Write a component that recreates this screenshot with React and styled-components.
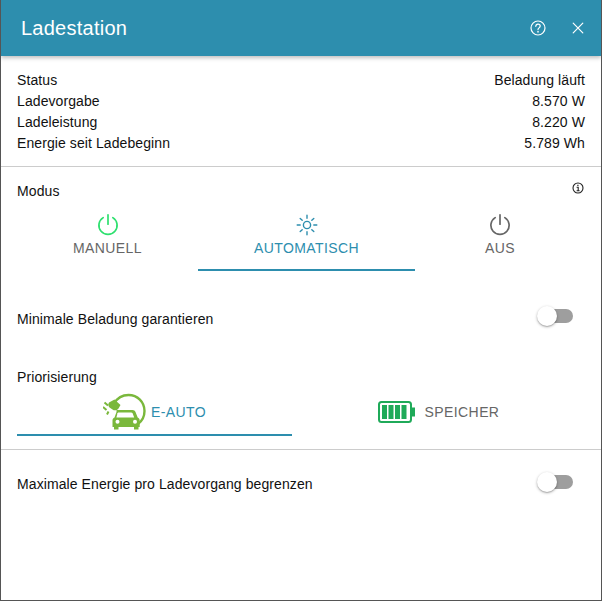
import React from "react";
import styled, { createGlobalStyle } from "styled-components";

const Global = createGlobalStyle`
  html, body { margin: 0; padding: 0; background: #fff; }
  * { box-sizing: border-box; }
`;

const Dialog = styled.div`
  width: 602px;
  height: 601px;
  display: flex;
  flex-direction: column;
  border: 2px solid #555;
  border-width: 0 1px 1px 1px;
  background: #fff;
  font-family: "Liberation Sans", Arial, sans-serif;
  font-size: 14px;
  letter-spacing: 0.09px;
  color: #111;
  overflow: hidden;
`;

const Header = styled.header`
  height: 56px;
  flex: none;
  background: #2d8eae;
  color: #fff;
  display: flex;
  align-items: center;
  padding: 0 3px 0 20px;
  box-shadow: 0 2px 4px rgba(0, 0, 0, 0.25);
  position: relative;
`;

const Title = styled.h1`
  flex: 1;
  margin: 0;
  font-size: 20px;
  font-weight: 400;
  letter-spacing: 0.25px;
`;

const HeaderIcon = styled.span`
  width: 40px;
  height: 24px;
  display: flex;
  align-items: center;
  justify-content: center;
`;

const StatusList = styled.section`
  padding: 14px 16px 12px;
  border-bottom: 1px solid #ccc;
`;

const StatusRow = styled.div`
  display: flex;
  justify-content: space-between;
  height: 21px;
  line-height: 21px;
`;

const ModeSection = styled.section`
  padding: 14px 16px 0;
`;

const LabelRow = styled.div`
  display: flex;
  justify-content: space-between;
  align-items: center;
  height: 20px;
`;

const InfoWrap = styled.span`
  display: flex;
  margin: -6px 1px 0 0;
`;

const Tabs = styled.div`
  display: flex;
`;

const Tab = styled.div`
  flex: ${(p) => p.$grow} 0 0;
  height: ${(p) => p.$height}px;
  display: flex;
  flex-direction: ${(p) => p.$dir || "column"};
  align-items: center;
  justify-content: center;
  gap: ${(p) => p.$gap || 0}px;
  border-bottom: 2px solid ${(p) => (p.$active ? "#2d8eae" : "transparent")};
  color: ${(p) => (p.$active ? "#2d8eae" : "#666")};
`;

const ModeTab = styled(Tab)`
  padding-top: 12px;
  gap: 1px;
  justify-content: flex-start;
`;

const TabLabel = styled.span`
  font-size: 14px;
  line-height: 20px;
  letter-spacing: 0.4px;
  text-transform: uppercase;
`;

const SwitchRow = styled.div`
  display: flex;
  justify-content: space-between;
  align-items: center;
  height: 20px;
  padding-right: 12px;
`;

const SwitchLabel = styled.span`
  position: relative;
  top: ${(p) => p.$drop}px;
`;

const Track = styled.span`
  position: relative;
  display: block;
  width: 34px;
  height: 14px;
  border-radius: 7px;
  background: #9e9e9e;
`;

const Knob = styled.span`
  position: absolute;
  left: -2px;
  top: -3px;
  width: 20px;
  height: 20px;
  border-radius: 50%;
  background: #fff;
  box-shadow: 0 1px 3px rgba(0, 0, 0, 0.3), 0 1px 1px rgba(0, 0, 0, 0.14);
`;

const MinCharge = styled.div`
  padding: 35px 16px 0;
`;

const PrioSection = styled.section`
  padding: 41px 16px 13px;
  border-bottom: 1px solid #ccc;
`;

const PrioTabs = styled(Tabs)`
  margin-top: 3px;
`;

const MaxEnergy = styled.section`
  padding: 22px 16px 0;
`;

const Power = ({ color }) => (
  <svg width="24" height="24" viewBox="0 0 24 24" fill="none" stroke={color} strokeWidth="1.7" strokeLinecap="round">
    <path d="M7.2 4.6a9.1 9.1 0 1 0 9.6 0" />
    <path d="M12 1.8v9.4" />
  </svg>
);

const Sun = () => (
  <svg width="24" height="24" viewBox="0 0 24 24" fill="none" stroke="#2d8eae" strokeWidth="1.4" strokeLinecap="round">
    <circle cx="12" cy="12" r="3.6" />
    <path d="M12 2.2v3M12 18.8v3M2.2 12h3M18.8 12h3M5.2 5.4l2 1.9M16.8 16.7l2 1.9M18.8 5.4l-2 1.9M7.2 16.7l-2 1.9" />
  </svg>
);

const EvIcon = () => (
  <svg width="46" height="38" viewBox="0 0 46 38">
    <path d="M11 10.5C14 5.5 19 2 25.500 2 34.500 2 41.500 9 41.500 18c0 5.500-2.500 10-6.500 13" fill="none" stroke="#7ab83c" strokeWidth="2.400" />
    <path d="M11.500 6.500l6 5.500-2 3.500c-1.500 2-4 2.500-6 1L6.500 14.500c-1.500-1.500-1.500-3.500-.5-5z" fill="#7ab83c" />
    <path d="M1.500 9.500l3.500 3M0 14l3.500 3M5.500 18.500L4 21.500" stroke="#7ab83c" strokeWidth="2" fill="none" />
    <path d="M13.500 17h16c1.500 0 2.500.8 3 2l2.200 5.500c1.300.6 2 1.600 2 3V34h-1.200v2.500h-4.500V34H15.500v2.500H11V34H9.500v-6.500c0-1.400.7-2.400 2-3L13.500 19c.1-1 0-2 0-2z" fill="#7ab83c" />
    <path d="M15.200 19.500h12.800c.8 0 1.400.4 1.700 1.100l1.500 3.900H13.400l1.100-4.300z" fill="#fff" />
    <circle cx="14.500" cy="28.800" r="2" fill="#fff" />
    <circle cx="32" cy="28.800" r="2" fill="#fff" />
  </svg>
);

const Battery = () => (
  <svg width="38" height="22" viewBox="0 0 38 22">
    <rect x="1" y="1" width="32" height="20" rx="2.500" fill="none" stroke="#1faa59" strokeWidth="2" />
    <rect x="34" y="6.500" width="3" height="9" fill="#1faa59" />
    <rect x="4" y="4" width="5" height="14" fill="#1faa59" />
    <rect x="10.500" y="4" width="5" height="14" fill="#1faa59" />
    <rect x="17" y="4" width="5" height="14" fill="#1faa59" />
    <rect x="23.500" y="4" width="5" height="14" fill="#1faa59" />
  </svg>
);

const Help = () => (
  <svg width="16" height="16" viewBox="0 0 16 16" fill="none" stroke="#fff" strokeWidth="1.200" strokeLinecap="round">
    <circle cx="8" cy="8" r="7" />
    <path d="M5.800 6.300C5.900 5 6.800 4.200 8 4.200c1.300 0 2.200.8 2.200 1.900 0 1.800-2.200 1.700-2.200 3.500" />
    <path d="M8 11.600v.3" strokeWidth="1.500" />
  </svg>
);

const Close = () => (
  <svg width="12" height="12" viewBox="0 0 12 12" stroke="#fff" strokeWidth="1.200" strokeLinecap="round">
    <path d="M1.200 1.200l9.600 9.600M10.800 1.200l-9.600 9.600" />
  </svg>
);

const Info = () => (
  <svg width="12" height="12" viewBox="0 0 12 12" fill="none" stroke="#222" strokeWidth="1.100">
    <circle cx="6" cy="6" r="5" />
    <path d="M4.600 5.200H6.200V8.800M4.600 8.800H7.600" />
    <path d="M5.300 3.300h1.200" strokeWidth="1.300" />
  </svg>
);

const Switch = () => (
  <Track>
    <Knob />
  </Track>
);

const rows = [
  ["Status", "Beladung läuft"],
  ["Ladevorgabe", "8.570 W"],
  ["Ladeleistung", "8.220 W"],
  ["Energie seit Ladebeginn", "5.789 Wh"],
];

export default function App() {
  return (
    <>
      <Global />
      <Dialog>
        <Header>
          <Title>Ladestation</Title>
          <HeaderIcon><Help /></HeaderIcon>
          <HeaderIcon><Close /></HeaderIcon>
        </Header>
        <StatusList>
          {rows.map(([k, v]) => (
            <StatusRow key={k}>
              <span>{k}</span>
              <span>{v}</span>
            </StatusRow>
          ))}
        </StatusList>
        <ModeSection>
          <LabelRow>
            <span>Modus</span>
            <InfoWrap><Info /></InfoWrap>
          </LabelRow>
          <Tabs>
            <ModeTab $grow={181} $height={70}>
              <Power color="#2ee06f" />
              <TabLabel>Manuell</TabLabel>
            </ModeTab>
            <ModeTab $grow={217} $height={70} $active>
              <Sun />
              <TabLabel>Automatisch</TabLabel>
            </ModeTab>
            <ModeTab $grow={170} $height={70}>
              <Power color="#666" />
              <TabLabel>Aus</TabLabel>
            </ModeTab>
          </Tabs>
        </ModeSection>
        <MinCharge>
          <SwitchRow>
            <SwitchLabel $drop={3}>Minimale Beladung garantieren</SwitchLabel>
            <Switch />
          </SwitchRow>
        </MinCharge>
        <PrioSection>
          <LabelRow>Priorisierung</LabelRow>
          <PrioTabs>
            <Tab $grow={275} $height={46} $dir="row" $gap={2} $active>
              <EvIcon />
              <TabLabel>E-Auto</TabLabel>
            </Tab>
            <Tab $grow={293} $height={46} $dir="row" $gap={9}>
              <Battery />
              <TabLabel>Speicher</TabLabel>
            </Tab>
          </PrioTabs>
        </PrioSection>
        <MaxEnergy>
          <SwitchRow>
            <SwitchLabel $drop={2}>Maximale Energie pro Ladevorgang begrenzen</SwitchLabel>
            <Switch />
          </SwitchRow>
        </MaxEnergy>
      </Dialog>
    </>
  );
}
